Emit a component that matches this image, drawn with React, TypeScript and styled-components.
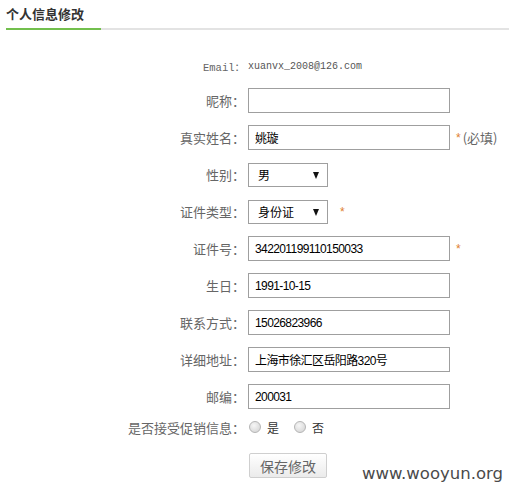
import React from "react";
import styled, { createGlobalStyle } from "styled-components";

const GlobalStyle = createGlobalStyle`
  html, body {
    margin: 0;
    padding: 0;
    background: #ffffff;
  }
  body {
    font-family: "Liberation Sans", "Noto Sans CJK SC", sans-serif;
    color: #333;
  }
`;

const Page = styled.div`
  position: relative;
  width: 509px;
  height: 485px;
  overflow: hidden;
`;

const Header = styled.div`
  margin-left: 6px;
  border-bottom: 2px solid #e3e3e3;
  display: flex;
`;

const Title = styled.h2`
  margin: 0 0 -2px 0;
  width: 95px;
  padding: 2px 0 2px 0;
  line-height: 24px;
  font-size: 13px;
  font-weight: bold;
  color: #333;
  font-family: "Noto Sans CJK SC", sans-serif;
  border-bottom: 2px solid #72bf4d;
`;

const Form = styled.form`
  padding-top: 20px;
  display: flex;
  flex-direction: column;
`;

const Row = styled.div<{ $h?: number }>`
  display: grid;
  grid-template-columns: 245px 1fr;
  column-gap: 3px;
  align-items: center;
  height: ${(p) => p.$h ?? 37}px;
`;

const Label = styled.label<{ $mono?: boolean }>`
  text-align: right;
  font-size: ${(p) => (p.$mono ? "10.5px" : "13px")};
  color: #666;
  font-family: ${(p) =>
    p.$mono
      ? `"Liberation Mono", "Noto Sans CJK SC", monospace`
      : `"Noto Sans CJK SC", sans-serif`};
  white-space: nowrap;
`;

const EmailValue = styled.span`
  font-family: "Liberation Mono", monospace;
  font-size: 10px;
  color: #555;
`;

const Field = styled.div`
  display: flex;
  align-items: center;
  gap: 6px;
`;

const TextInput = styled.input`
  box-sizing: border-box;
  width: 202px;
  height: 25px;
  border: 1px solid #9f9f9f;
  padding: 0 6px;
  margin: 0;
  font-family: "Liberation Sans", "Noto Sans CJK SC", sans-serif;
  font-size: 12px;
  letter-spacing: -0.6px;
  color: #000;
  background: #fff;
  outline: none;
`;

const SelectWrap = styled.div`
  position: relative;
  width: 80px;
  height: 24px;
  &::after {
    content: "";
    position: absolute;
    right: 9px;
    top: 9px;
    border-left: 3px solid transparent;
    border-right: 3px solid transparent;
    border-top: 7px solid #111;
    pointer-events: none;
  }
`;

const Select = styled.select`
  appearance: none;
  -webkit-appearance: none;
  box-sizing: border-box;
  width: 80px;
  height: 24px;
  border: 1px solid #9f9f9f;
  border-radius: 0;
  padding: 0 0 0 9px;
  margin: 0;
  background: #fff;
  font-family: "Noto Sans CJK SC", sans-serif;
  font-size: 12px;
  color: #000;
  outline: none;
`;

const Star = styled.span<{ $pad?: number }>`
  color: #e0802e;
  font-size: 12px;
  font-family: "Liberation Sans", sans-serif;
  padding-left: ${(p) => p.$pad ?? 0}px;
`;

const Hint = styled.span`
  color: #666;
  font-size: 13px;
  font-family: "Noto Sans CJK SC", sans-serif;
  margin-left: -4px;
`;

const RadioGroup = styled.div`
  display: flex;
  align-items: center;
`;

const RadioLabel = styled.label`
  display: flex;
  align-items: center;
  gap: 6px;
  margin-right: 14px;
  font-size: 12px;
  color: #333;
  font-family: "Noto Sans CJK SC", sans-serif;
`;

const Radio = styled.input`
  appearance: none;
  -webkit-appearance: none;
  margin: 0 0 0 1px;
  width: 12px;
  height: 12px;
  border-radius: 50%;
  border: 1px solid #b5b5b5;
  background: radial-gradient(circle at 40% 35%, #f6f6f6 0%, #dcdcdc 70%, #cfcfcf 100%);
`;

const ButtonRow = styled.div`
  display: grid;
  grid-template-columns: 245px 1fr;
  column-gap: 4px;
  margin-top: 14px;
`;

const SaveButton = styled.button`
  grid-column: 2;
  width: 78px;
  height: 25px;
  border: 1px solid #cfcfcf;
  border-radius: 2px;
  background: linear-gradient(#ffffff, #ebebeb);
  color: #666;
  font-size: 14px;
  font-family: "Noto Sans CJK SC", sans-serif;
  padding: 0;
  cursor: pointer;
`;

const Watermark = styled.div`
  position: absolute;
  right: 6px;
  top: 464px;
  font-family: "DejaVu Sans", Verdana, sans-serif;
  font-size: 16.5px;
  color: #4a4a4a;
  line-height: 20px;
`;

type TextRow = { label: string; value: string; star?: boolean; hint?: boolean };

const topRows: TextRow[] = [
  { label: "昵称：", value: "" },
  { label: "真实姓名：", value: "姚璇", star: true, hint: true },
];

const bottomRows: TextRow[] = [
  { label: "证件号：", value: "342201199110150033", star: true },
  { label: "生日：", value: "1991-10-15" },
  { label: "联系方式：", value: "15026823966" },
  { label: "详细地址：", value: "上海市徐汇区岳阳路320号" },
  { label: "邮编：", value: "200031" },
];

const renderTextRow = (r: TextRow) => (
  <Row key={r.label}>
    <Label>{r.label}</Label>
    <Field>
      <TextInput type="text" defaultValue={r.value} />
      {r.star && <Star>*</Star>}
      {r.hint && <Hint>(必填)</Hint>}
    </Field>
  </Row>
);

export default function App() {
  return (
    <Page>
      <GlobalStyle />
      <Header>
        <Title>个人信息修改</Title>
      </Header>
      <Form onSubmit={(e) => e.preventDefault()}>
        <Row $h={32}>
          <Label $mono>Email：</Label>
          <EmailValue>xuanvx_2008@126.com</EmailValue>
        </Row>
        {topRows.map(renderTextRow)}
        <Row>
          <Label>性别：</Label>
          <Field>
            <SelectWrap>
              <Select defaultValue="男">
                <option>男</option>
                <option>女</option>
              </Select>
            </SelectWrap>
          </Field>
        </Row>
        <Row>
          <Label>证件类型：</Label>
          <Field>
            <SelectWrap>
              <Select defaultValue="身份证">
                <option>身份证</option>
                <option>护照</option>
              </Select>
            </SelectWrap>
            <Star $pad={6}>*</Star>
          </Field>
        </Row>
        {bottomRows.map(renderTextRow)}
        <Row $h={24}>
          <Label>是否接受促销信息：</Label>
          <RadioGroup>
            <RadioLabel>
              <Radio type="radio" name="promo" />是
            </RadioLabel>
            <RadioLabel>
              <Radio type="radio" name="promo" />否
            </RadioLabel>
          </RadioGroup>
        </Row>
        <ButtonRow>
          <SaveButton type="submit">保存修改</SaveButton>
        </ButtonRow>
      </Form>
      <Watermark>www.wooyun.org</Watermark>
    </Page>
  );
}
